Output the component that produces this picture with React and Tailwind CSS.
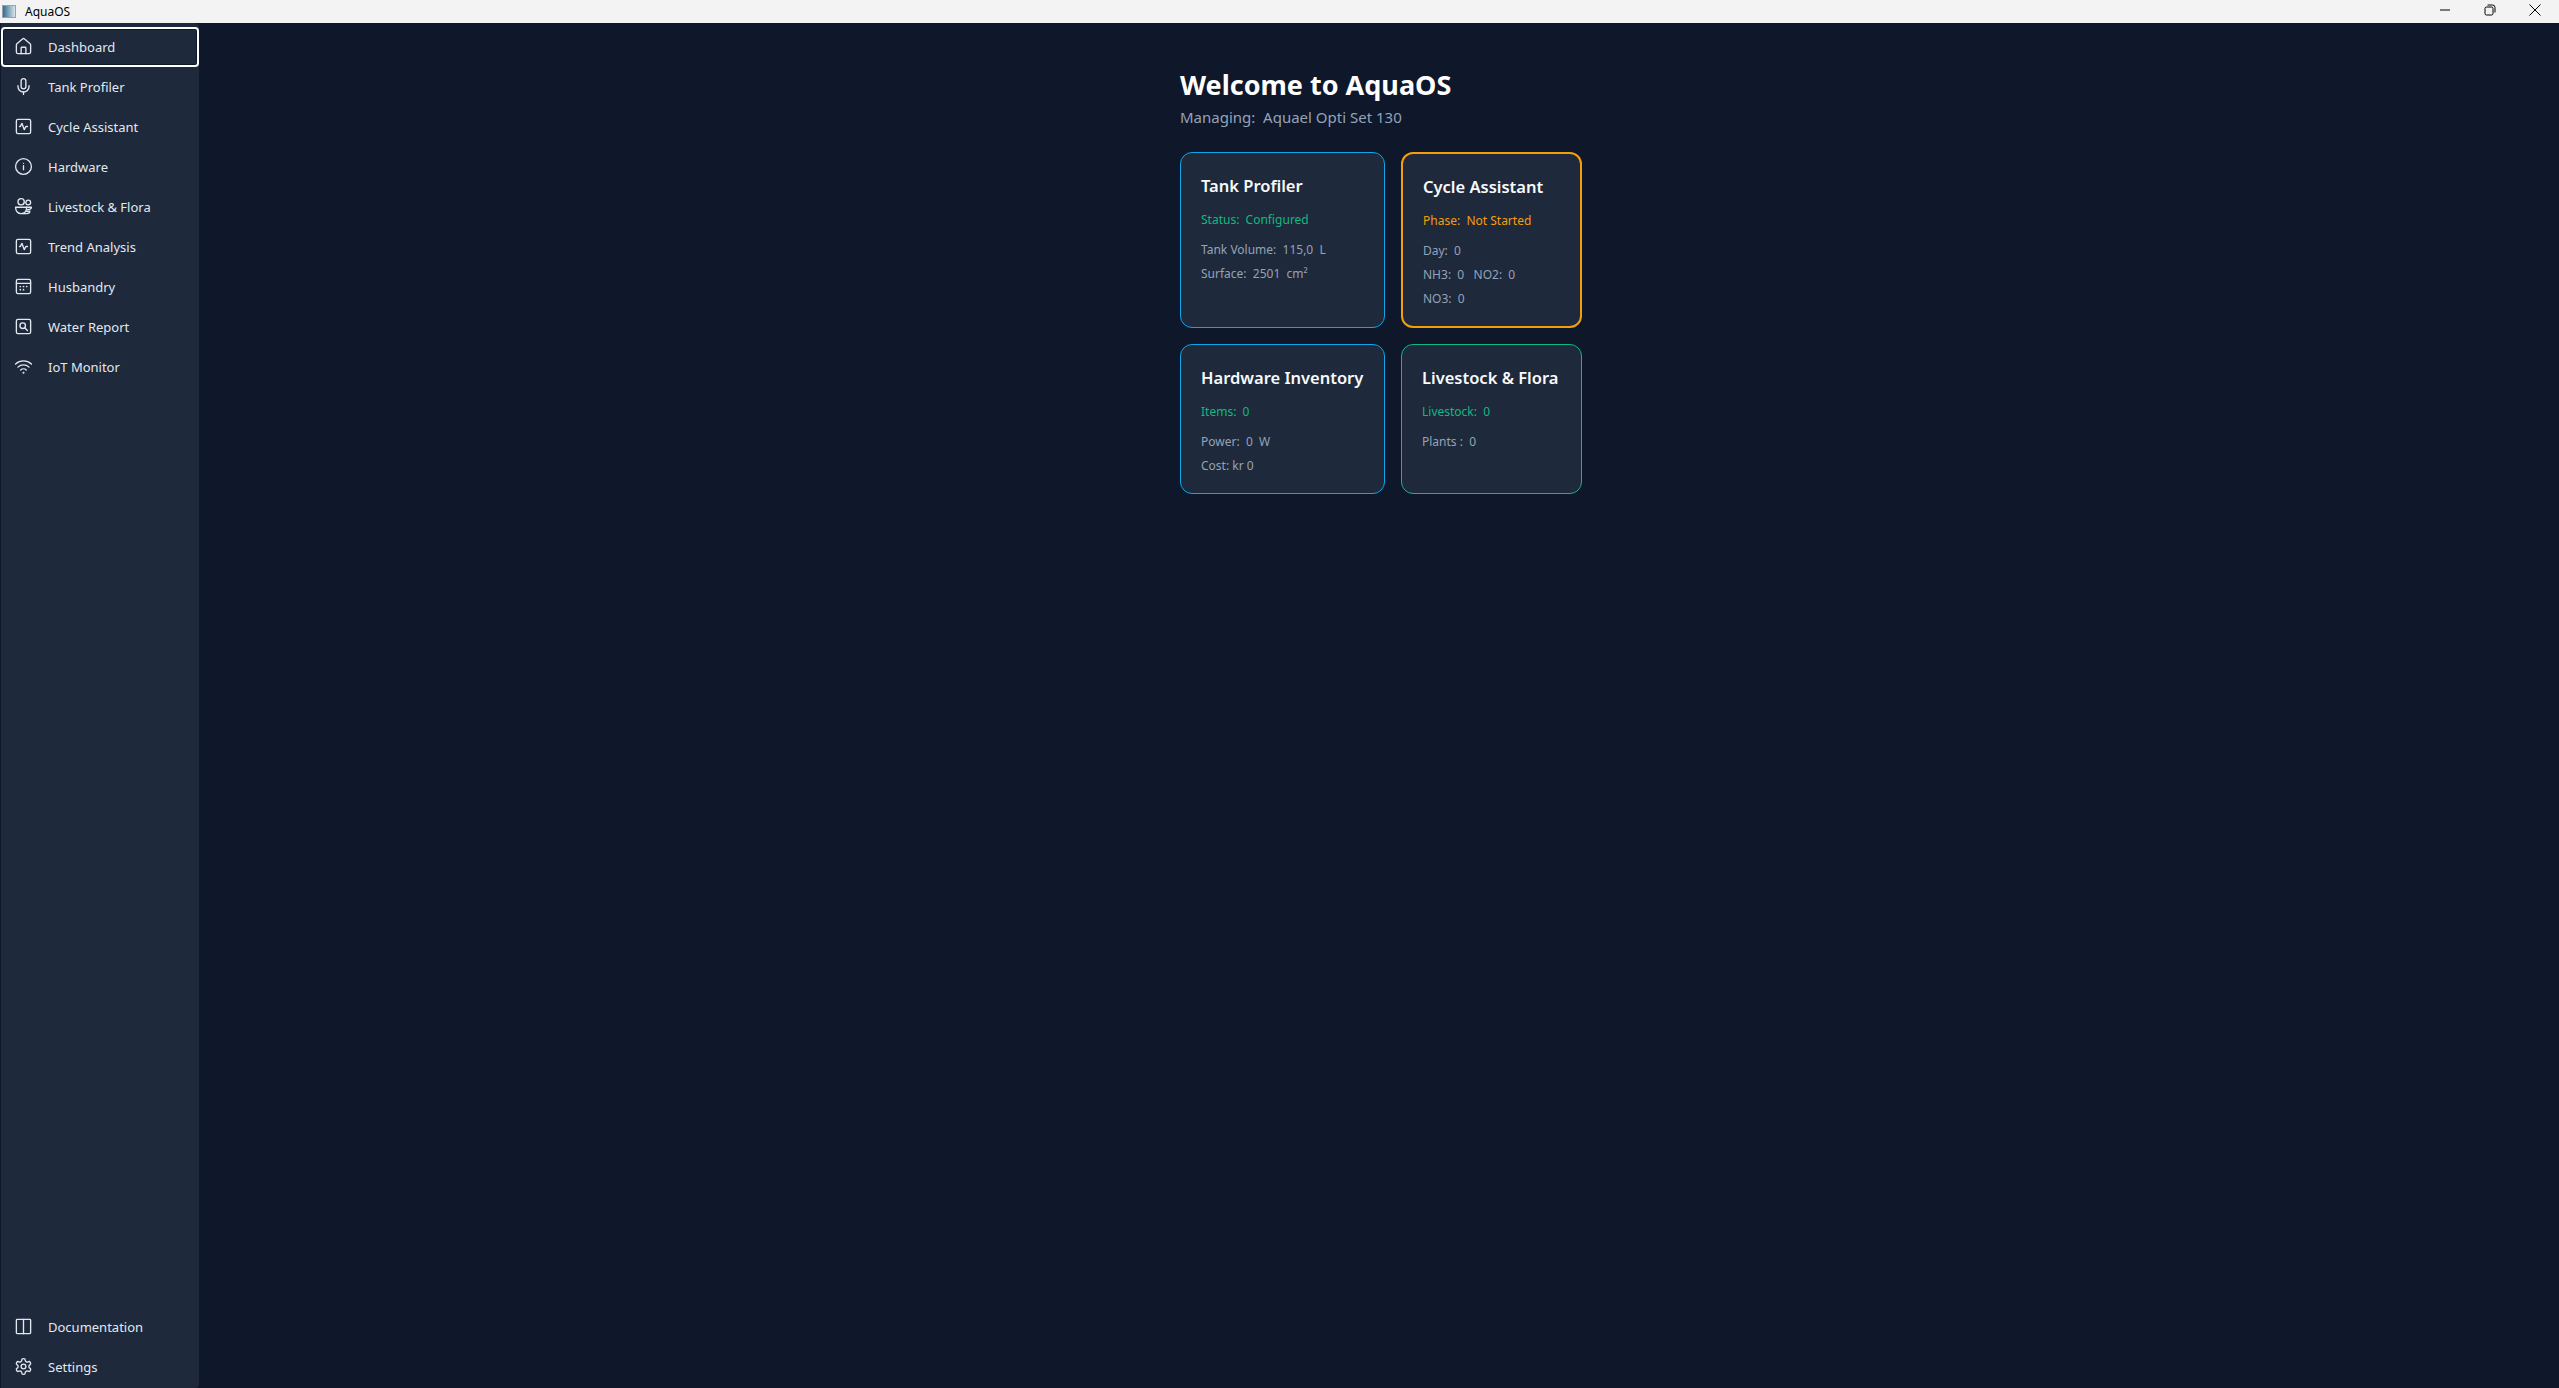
import React from "react";

const Icon = ({ children }) => (
  <svg width="19" height="19" viewBox="0 0 24 24" fill="none" stroke="currentColor" strokeWidth="1.7" strokeLinecap="round" strokeLinejoin="round" className="shrink-0 -mt-[3px]">
    {children}
  </svg>
);

const HomeIcon = () => (
  <Icon>
    <path d="M9 21v-7a1 1 0 0 1 1-1h4a1 1 0 0 1 1 1v7" />
    <path d="M3 10a2 2 0 0 1 .7-1.5l7-6a2 2 0 0 1 2.6 0l7 6a2 2 0 0 1 .7 1.5v9a2 2 0 0 1-2 2H5a2 2 0 0 1-2-2z" />
  </Icon>
);
const MicIcon = () => (
  <Icon>
    <rect x="9" y="2" width="6" height="13" rx="3" />
    <path d="M19 11v1a7 7 0 0 1-14 0v-1" />
    <path d="M12 19v3" />
  </Icon>
);
const ActivityIcon = () => (
  <Icon>
    <rect x="3" y="3" width="18" height="18" rx="2" />
    <path d="M17 12h-2l-2 4-3-8-2 4H7" />
  </Icon>
);
const InfoIcon = () => (
  <Icon>
    <circle cx="12" cy="12" r="10" />
    <path d="M12 16v-5" />
    <path d="M12 8h.01" />
  </Icon>
);
const LivestockIcon = () => (
  <Icon>
    <circle cx="9" cy="6" r="4" />
    <circle cx="18" cy="7" r="3" />
    <path d="M2 13h14c0 5-3 8-7 8s-7-3-7-8z" />
    <path d="M16 13h6c0 2-1.5 3-5 3" />
    <path d="M15 18h5c0 2-1.5 3-4 3h-5" />
  </Icon>
);
const CalendarIcon = () => (
  <Icon>
    <rect x="3" y="3" width="18" height="18" rx="2" />
    <path d="M3 8h18" />
    <path d="M8 12h.01M12 12h.01M16 12h.01M8 16h.01M12 16h.01" strokeWidth="2.2" />
  </Icon>
);
const SearchSquareIcon = () => (
  <Icon>
    <rect x="3" y="3" width="18" height="18" rx="2" />
    <circle cx="11" cy="11" r="3.5" />
    <path d="M17 17l-3.5-3.5" />
  </Icon>
);
const WifiIcon = () => (
  <Icon>
    <path d="M12 20h.01" strokeWidth="2.6" />
    <path d="M2 8.8a15 15 0 0 1 20 0" />
    <path d="M5 12.8a10 10 0 0 1 14 0" />
    <path d="M8.5 16.4a5 5 0 0 1 7 0" />
  </Icon>
);
const BookIcon = () => (
  <Icon>
    <rect x="3" y="3" width="18" height="18" rx="1" />
    <path d="M12 3v18" />
  </Icon>
);
const GearIcon = () => (
  <Icon>
    <path d="M12.22 2h-.44a2 2 0 0 0-2 2v.18a2 2 0 0 1-1 1.73l-.43.25a2 2 0 0 1-2 0l-.15-.08a2 2 0 0 0-2.73.73l-.22.38a2 2 0 0 0 .73 2.73l.15.1a2 2 0 0 1 1 1.72v.51a2 2 0 0 1-1 1.74l-.15.09a2 2 0 0 0-.73 2.73l.22.38a2 2 0 0 0 2.73.73l.15-.08a2 2 0 0 1 2 0l.43.25a2 2 0 0 1 1 1.73V20a2 2 0 0 0 2 2h.44a2 2 0 0 0 2-2v-.18a2 2 0 0 1 1-1.73l.43-.25a2 2 0 0 1 2 0l.15.08a2 2 0 0 0 2.73-.73l.22-.39a2 2 0 0 0-.73-2.73l-.15-.08a2 2 0 0 1-1-1.74v-.5a2 2 0 0 1 1-1.74l.15-.09a2 2 0 0 0 .73-2.73l-.22-.38a2 2 0 0 0-2.73-.73l-.15.08a2 2 0 0 1-2 0l-.43-.25a2 2 0 0 1-1-1.73V4a2 2 0 0 0-2-2z" />
    <circle cx="12" cy="12" r="3" />
  </Icon>
);

const NavItem = ({ icon, label, active }) => (
  <div className="relative h-10 flex items-center pl-[13px] gap-[15px] text-[13px] text-[#e2e8f0]">
    {/* focus ring sits 1px above the row */}
    {active && <div className="absolute left-0 right-0 -top-px bottom-px rounded-[4px] border-2 border-white shadow-[inset_0_0_0_1px_#0f172a]" />}
    {icon}
    <span>{label}</span>
  </div>
);

const Card = ({ title, status, lines, border, statusColor }) => (
  <div className={`rounded-[12px] bg-[#1e293b] px-5 pt-[21px] ${border}`}>
    <h2 className="text-[16.5px] leading-[24px] font-semibold text-[#f8fafc] whitespace-nowrap">{title}</h2>
    <p className={`mt-[14px] text-[12px] leading-[16px] whitespace-pre ${statusColor}`}>{status}</p>
    <div className="mt-[14px] flex flex-col gap-[8px]">
      {lines.map((line) => (
        <p key={line} className="text-[12px] leading-[16px] text-[#94a3b8] whitespace-pre">{line}</p>
      ))}
    </div>
  </div>
);

export default function App() {
  return (
    <div className="h-[1388px] w-full flex flex-col bg-[#0f172a] overflow-hidden" style={{ fontFamily: '"Noto Sans", sans-serif' }}>
      <div className="h-[23px] shrink-0 bg-[#f3f3f3] flex items-center justify-between text-black">
        <div className="flex items-center text-[12px] pl-[2px] gap-[9px]">
          <div className="w-[14px] h-[13px] border border-gray-400 bg-gradient-to-r from-[#2f6f8f] to-[#d8e4ea]" />
          <span>AquaOS</span>
        </div>
        <div className="flex items-center pr-[18px] pb-[3px] gap-[33px]">
          <svg width="12" height="12" viewBox="0 0 12 12" fill="none" stroke="currentColor" strokeWidth="1">
            <path d="M1 6h10" />
          </svg>
          <svg width="12" height="12" viewBox="0 0 12 12" fill="none" stroke="currentColor" strokeWidth="1">
            <rect x="1" y="3" width="8" height="8" rx="1.5" />
            <path d="M3.5 1h5A2.5 2.5 0 0 1 11 3.5v5" />
          </svg>
          <svg width="12" height="12" viewBox="0 0 12 12" fill="none" stroke="currentColor" strokeWidth="1">
            <path d="M.5 .5l11 11M11.5 .5l-11 11" />
          </svg>
        </div>
      </div>
      <div className="flex-1 flex min-h-0">
        <aside className="w-[198px] shrink-0 ml-px bg-[#1e293b] rounded-r-[4px] flex flex-col justify-between pt-[5px]">
          <nav className="flex flex-col">
            <NavItem active icon={<HomeIcon />} label="Dashboard" />
            <NavItem icon={<MicIcon />} label="Tank Profiler" />
            <NavItem icon={<ActivityIcon />} label="Cycle Assistant" />
            <NavItem icon={<InfoIcon />} label="Hardware" />
            <NavItem icon={<LivestockIcon />} label="Livestock & Flora" />
            <NavItem icon={<ActivityIcon />} label="Trend Analysis" />
            <NavItem icon={<CalendarIcon />} label="Husbandry" />
            <NavItem icon={<SearchSquareIcon />} label="Water Report" />
            <NavItem icon={<WifiIcon />} label="IoT Monitor" />
          </nav>
          <nav className="flex flex-col">
            <NavItem icon={<BookIcon />} label="Documentation" />
            <NavItem icon={<GearIcon />} label="Settings" />
          </nav>
        </aside>
        <main className="flex-1 flex justify-center pl-[4px] pt-[43px]">
          <div className="w-[402px]">
            <h1 className="text-[27px] leading-[38px] font-bold text-white whitespace-nowrap">Welcome to AquaOS</h1>
            <p className="mt-[3px] text-[15px] leading-[20px] text-[#94a3b8] whitespace-pre">Managing:  Aquael Opti Set 130</p>
            <div className="mt-[25px] grid grid-cols-[205px_181px] grid-rows-[176px_150px] gap-4">
              <Card title="Tank Profiler" border="border border-[#0ea5e9]" statusColor="text-[#10b981]" status="Status:  Configured" lines={["Tank Volume:  115,0  L", "Surface:  2501  cm²"]} />
              <Card title="Cycle Assistant" border="border-2 border-[#f59e0b]" statusColor="text-[#f59e0b]" status="Phase:  Not Started" lines={["Day:  0", "NH3:  0   NO2:  0", "NO3:  0"]} />
              <Card title="Hardware Inventory" border="border border-[#0ea5e9]" statusColor="text-[#10b981]" status="Items:  0" lines={["Power:  0  W", "Cost: kr 0"]} />
              <Card title="Livestock & Flora" border="border border-[#10b981]" statusColor="text-[#10b981]" status="Livestock:  0" lines={["Plants :  0"]} />
            </div>
          </div>
        </main>
      </div>
    </div>
  );
}
